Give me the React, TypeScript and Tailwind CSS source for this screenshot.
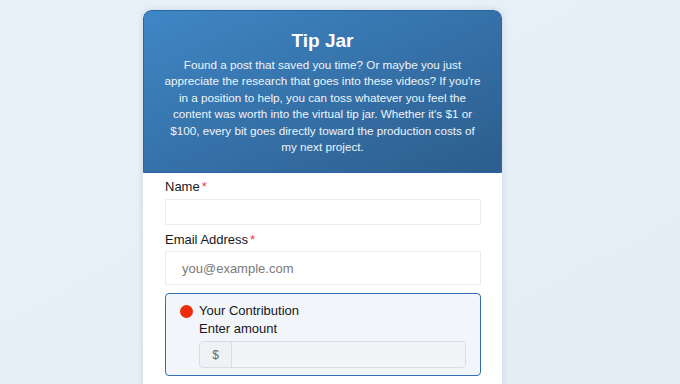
import React from 'react';

const Required = () => <span className="ml-0.5 text-[#e53e3e]">*</span>;

const intro = [
    'Found a post that saved you time? Or maybe you just',
    "appreciate the research that goes into these videos? If you're",
    'in a position to help, you can toss whatever you feel the',
    "content was worth into the virtual tip jar. Whether it's $1 or",
    '$100, every bit goes directly toward the production costs of',
    'my next project.',
];

export default function App() {
    return (
        <div
            className="flex h-[384px] w-[680px] overflow-hidden bg-gradient-to-br from-[#e9f1f8] to-[#e4edf5] pt-[10px] pl-[143px]"
            style={{ fontFamily: '"Liberation Sans", Arial, sans-serif' }}
        >
            <div className="flex h-[400px] w-[359px] flex-col overflow-hidden rounded-t-[8px] bg-white shadow-[0_0_6px_rgba(30,60,100,0.14)]">
                <div className="flex flex-col items-center rounded-t-[8px] border border-[#2a66a3] bg-gradient-to-br from-[#3f87c6] to-[#2c5d8d] px-[14px] pt-[17px] pb-[17px] text-center text-white">
                    <h1 className="text-[19px] leading-[26px] font-bold">Tip Jar</h1>
                    <p className="mt-[3px] text-[11.7px] leading-[16.4px] whitespace-nowrap text-[#eef4fa]">
                        {intro.map((line, i) => (
                            <React.Fragment key={i}>
                                {line}
                                {i < intro.length - 1 && <br />}
                            </React.Fragment>
                        ))}
                    </p>
                </div>
                <div className="flex flex-col px-[22px] pt-[5px]">
                    <label className="text-[13px] leading-[18px] text-[#15181c]">
                        Name
                        <Required />
                    </label>
                    <input className="mt-[3px] h-[26px] w-[316px] border border-[#ececec] bg-white outline-none" />
                    <label className="mt-[6px] text-[13px] leading-[18px] text-[#15181c]">
                        Email Address
                        <Required />
                    </label>
                    <input
                        placeholder="you@example.com"
                        className="mt-[2px] h-[34px] w-[316px] border border-[#ececec] bg-white px-[16px] text-[13px] text-[#333] outline-none placeholder:text-[#7a7a7a]"
                    />
                    <div className="mt-[8px] w-[316px] rounded-[4px] border-[1.5px] border-[#3270b3] bg-[#f2f6fa] pt-[8px] pb-[7px] pl-[14px] pr-[14px]">
                        <div className="flex items-center gap-[6px]">
                            <span className="h-[13px] w-[13px] rounded-full bg-[#ee2d0a]" />
                            <span className="text-[13px] leading-[18px] text-[#15181c]">Your Contribution</span>
                        </div>
                        <div className="pl-[19px]">
                            <div className="text-[13px] leading-[18px] text-[#15181c]">Enter amount</div>
                            <div className="mt-[3px] flex h-[27px] w-[267px] overflow-hidden rounded-[4px] border border-[#d6dde3]">
                                <span className="flex w-[32px] items-center justify-center border-r border-[#d6dde3] bg-[#eef2f5] text-[12px] text-[#666]">
                                    $
                                </span>
                                <input className="flex-1 bg-[#f2f5f8] outline-none" />
                            </div>
                        </div>
                    </div>
                </div>
            </div>
        </div>
    );
}
